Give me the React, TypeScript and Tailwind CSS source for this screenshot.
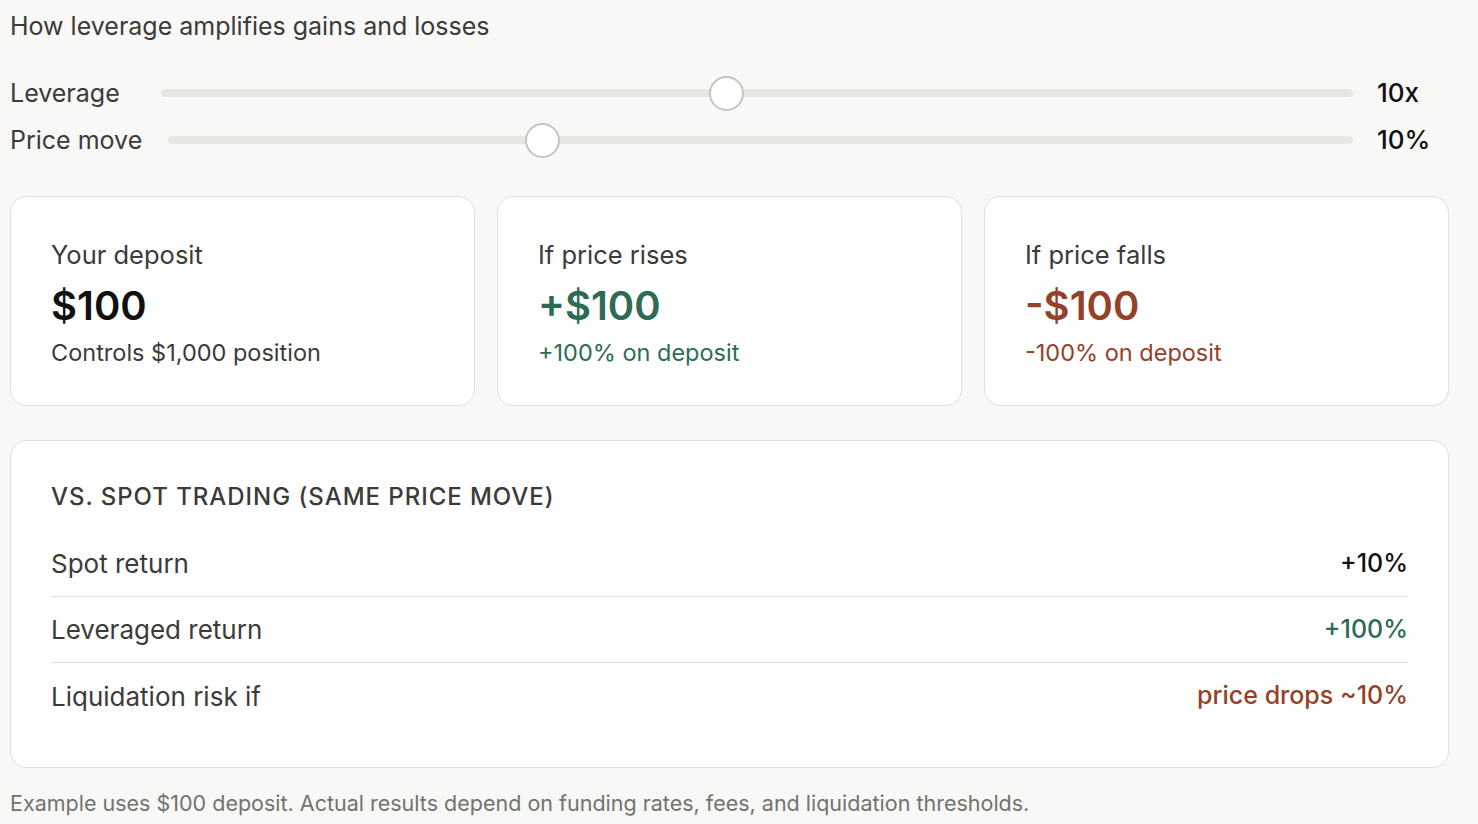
import React from "react";

function Slider({ left }: { left: string }) {
  return (
    <div className="relative h-[36px] flex-1 flex items-center">
      <div className="h-[8px] w-full rounded-full bg-[#e6e6e3]" />
      <div
        className={`absolute top-[1px] h-[35px] w-[35px] rounded-full border-2 border-[#c4c4c2] bg-white ${left}`}
      />
    </div>
  );
}

export default function App() {
  return (
    <div
      className="min-h-[824px] w-[1478px] bg-[#f8f8f6] text-[#3b3b38]"
      style={{ fontFamily: "Inter, 'Noto Sans', sans-serif" }}
    >
      <div className="w-[1439px] pl-[10px] pt-[8px] box-content">
        <h1 className="text-[25px] leading-[36px] font-normal">How leverage amplifies gains and losses</h1>

        <div className="mt-[25px] flex items-center h-[47px]">
          <div className="w-[151px] text-[25px] leading-[36px]">Leverage</div>
          <Slider left="left-[calc(47.37%-16.58px)]" />
          <div className="w-[96px] pl-[24px] text-[26px] font-medium text-[#111]">10x</div>
        </div>
        <div className="flex items-center h-[47px]">
          <div className="w-[158px] text-[25px] leading-[36px]">Price move</div>
          <Slider left="left-[calc(31.03%-10.86px)]" />
          <div className="w-[96px] pl-[24px] text-[26px] font-medium text-[#111]">10%</div>
        </div>

        <div className="mt-[33px] grid grid-cols-3 gap-[22px]">
          <div className="h-[210px] rounded-[16px] border border-[#e0e0dd] bg-white px-[40px] pt-[40px]">
            <div className="text-[25.5px] leading-[36px]">Your deposit</div>
            <div className="mt-[7px] text-[40px] leading-[52px] font-semibold text-[#111]">$100</div>
            <div className="mt-[4px] text-[23.5px] leading-[34px]">Controls $1,000 position</div>
          </div>
          <div className="h-[210px] rounded-[16px] border border-[#e0e0dd] bg-white px-[40px] pt-[40px]">
            <div className="text-[25.5px] leading-[36px]">If price rises</div>
            <div className="mt-[7px] text-[40px] leading-[52px] font-semibold text-[#2e6b55]">+$100</div>
            <div className="mt-[4px] text-[23.5px] leading-[34px] text-[#2e6b55]">+100% on deposit</div>
          </div>
          <div className="h-[210px] rounded-[16px] border border-[#e0e0dd] bg-white px-[40px] pt-[40px]">
            <div className="text-[25.5px] leading-[36px]">If price falls</div>
            <div className="mt-[7px] text-[40px] leading-[52px] font-semibold text-[#94412a]">-$100</div>
            <div className="mt-[4px] text-[23.5px] leading-[34px] text-[#94412a]">-100% on deposit</div>
          </div>
        </div>

        <div className="mt-[34px] h-[328px] rounded-[16px] border border-[#e0e0dd] bg-white px-[40px] pt-[39px]">
          <div className="text-[24px] leading-[34px] font-medium tracking-[0.04em] uppercase">
            VS. Spot trading (same price move)
          </div>
          <div className="mt-[17px]">
            <div className="flex h-[66px] items-center justify-between border-b border-[#e0e0dd]">
              <span className="text-[26px]">Spot return</span>
              <span className="text-[25px] font-medium text-[#111]">+10%</span>
            </div>
            <div className="flex h-[66px] items-center justify-between border-b border-[#e0e0dd]">
              <span className="text-[26px]">Leveraged return</span>
              <span className="text-[25px] font-medium text-[#2e6b55]">+100%</span>
            </div>
            <div className="flex h-[66px] items-center justify-between">
              <span className="text-[26px]">Liquidation risk if</span>
              <span className="text-[25px] font-medium text-[#94412a]">price drops ~10%</span>
            </div>
          </div>
        </div>

        <div className="mt-[20px] text-[21.5px] leading-[30px] text-[#73736e]">
          Example uses $100 deposit. Actual results depend on funding rates, fees, and liquidation thresholds.
        </div>
      </div>
    </div>
  );
}
